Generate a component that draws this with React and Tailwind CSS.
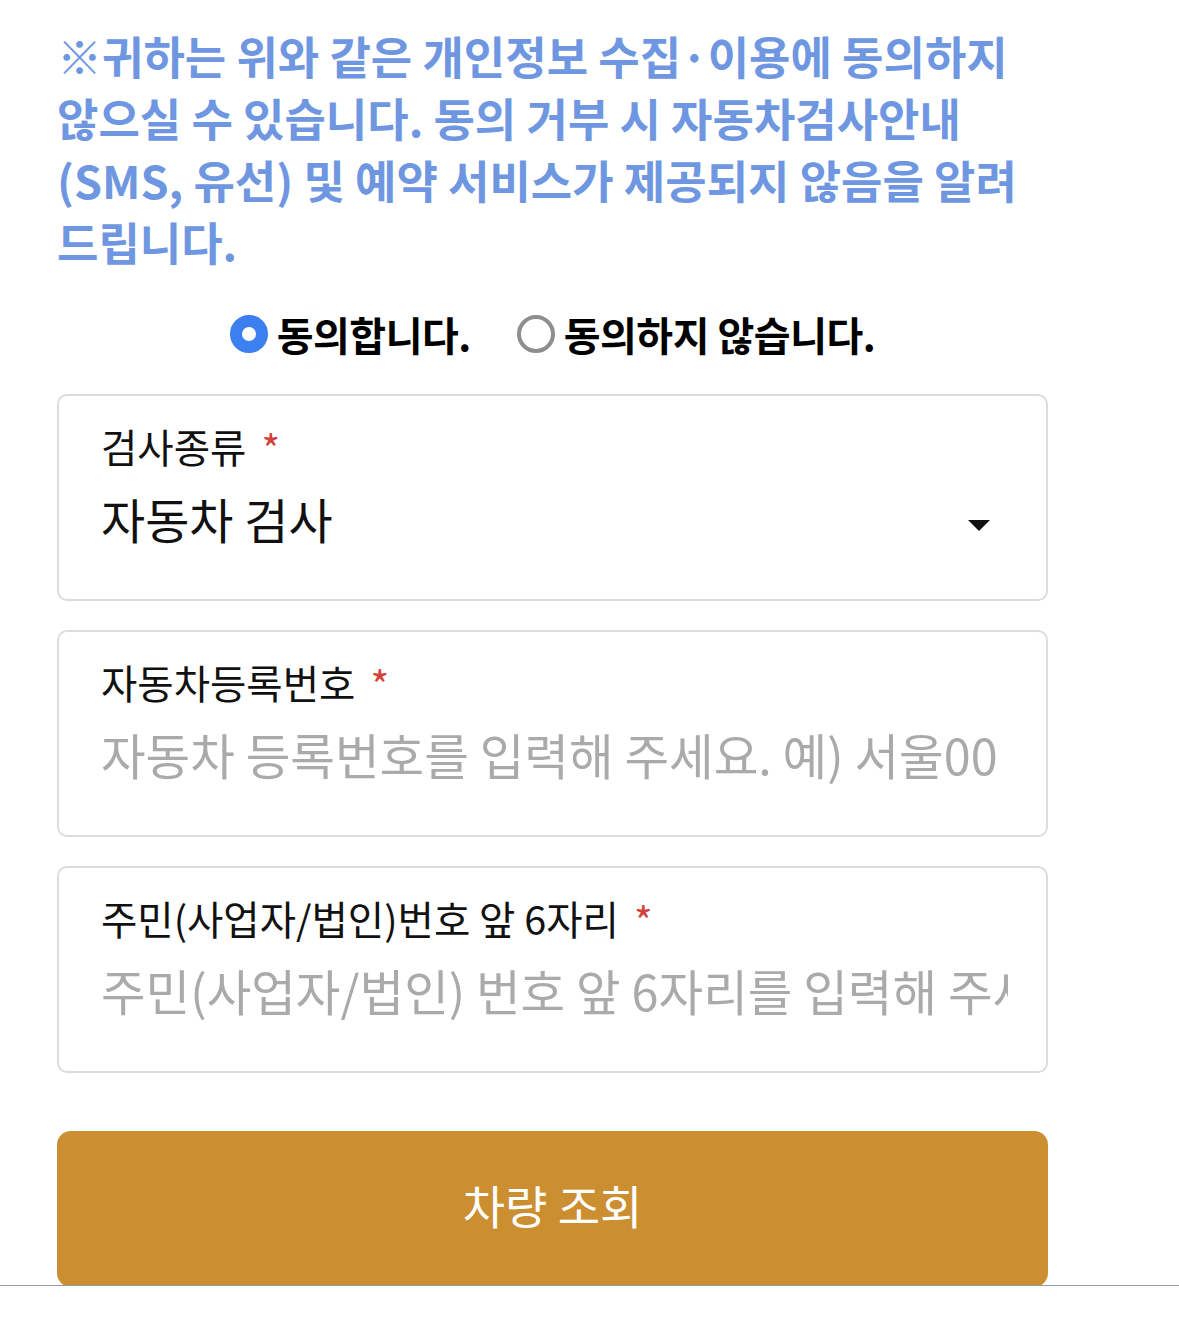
import React, { useState } from 'react';

const font = { fontFamily: '"Noto Sans CJK KR", "Noto Sans", sans-serif' };

const Field = ({ label, children }) => (
  <div className="w-full h-[207px] rounded-[10px] border-2 border-[#dcdcdc] bg-white pl-[42px] pr-[38px] pt-[22px]">
    <div className="flex items-start text-[39.5px] leading-[56px] text-[#111]">
      <span>{label}</span>
      <span className="ml-[15px] mt-[10px] text-[40px] leading-none text-[#d2413a]">*</span>
    </div>
    {children}
  </div>
);

const Radio = ({ checked, onClick, children }) => (
  <button onClick={onClick} className="flex items-center gap-[9px]">
    {checked ? (
      <span className="w-[38px] h-[38px] rounded-full border-[12px] border-[#3b7ff1] bg-white" />
    ) : (
      <span className="w-[38px] h-[38px] rounded-full border-[4px] border-[#8e8e8e] bg-white" />
    )}
    <span className="text-[40px] font-bold text-black leading-[40px] tracking-[-0.5px]">{children}</span>
  </button>
);

const App = () => {
  const [agree, setAgree] = useState(true);

  return (
    <div className="bg-white min-h-screen" style={font}>
      <div className="h-[1286px] overflow-hidden border-b border-[#9a9a9a]">
        <div className="w-[991px] ml-[57px] pt-[25px]">
          <p className="text-[45px] leading-[62px] font-bold text-[#6f97e1] tracking-[0px] whitespace-nowrap">
            ※귀하는 위와 같은 개인정보 수집·이용에 동의하지<br />
            않으실 수 있습니다. 동의 거부 시 자동차검사안내<br />
            (SMS, 유선) 및 예약 서비스가 제공되지 않음을 알려<br />
            드립니다.
          </p>

          <div className="mt-[41px] flex items-center justify-center gap-[46px] h-[40px]">
            <Radio checked={agree} onClick={() => setAgree(true)}>동의합니다.</Radio>
            <Radio checked={!agree} onClick={() => setAgree(false)}>동의하지 않습니다.</Radio>
          </div>

          <div className="mt-[40px] flex flex-col gap-[29px]">
            <Field label="검사종류">
              <div className="mt-[12px] flex items-center justify-between">
                <span className="text-[48px] leading-[64px] text-[#111]">자동차 검사</span>
                <svg width="22" height="11" viewBox="0 0 22 11" className="mr-[18px] mt-[14px]">
                  <path d="M0 0 H22 L11 11 Z" fill="#111" />
                </svg>
              </div>
            </Field>
            <Field label="자동차등록번호">
              <input
                className="mt-[12px] w-full text-[48.5px] leading-[64px] h-[64px] outline-none placeholder:text-[#aaaaaa]"
                style={font}
                placeholder="자동차 등록번호를 입력해 주세요. 예) 서울00"
              />
            </Field>
            <Field label="주민(사업자/법인)번호 앞 6자리">
              <input
                className="mt-[12px] w-full text-[48.5px] leading-[64px] h-[64px] outline-none placeholder:text-[#aaaaaa]"
                style={font}
                placeholder="주민(사업자/법인) 번호 앞 6자리를 입력해 주세요."
              />
            </Field>
          </div>

          <button className="mt-[58px] w-full h-[156px] rounded-[14px] bg-[#cb8f32] text-white text-[46px] leading-none pb-[10px]">
            차량 조회
          </button>
        </div>
      </div>
    </div>
  );
};

export default App;
